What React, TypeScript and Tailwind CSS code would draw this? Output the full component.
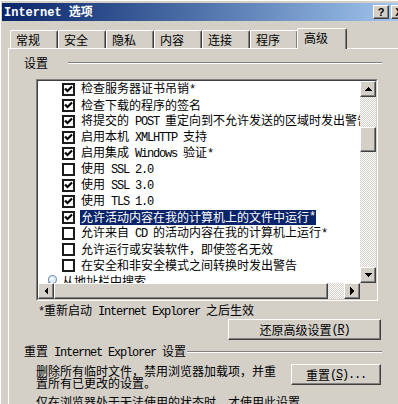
const LAT = "font-['Liberation_Mono',monospace] text-[12px] tracking-[-1.2px]";
const RAISED =
  "bg-[#d4d0c8] border border-t-white border-l-white border-r-[#404040] border-b-[#404040] shadow-[inset_-1px_-1px_#808080]";
const TRACK =
  "bg-[image:repeating-conic-gradient(#ffffff_0%_25%,#d4d0c8_0%_50%)] bg-size-[2px_2px]";

function T({ s, lat = LAT }: { s: string; lat?: string }) {
  const parts = s.split(/([\x20-\x7e]+)/).filter(Boolean);
  return (
    <>
      {parts.map((p, i) =>
        /^[\x20-\x7e]+$/.test(p) ? (
          <span key={i} className={lat}>
            {p}
          </span>
        ) : (
          <span key={i}>{p}</span>
        )
      )}
    </>
  );
}

function Arrow({ dir }: { dir: "up" | "down" | "left" | "right" }) {
  const pts = {
    up: "0,5 8,5 4,1",
    down: "0,1 8,1 4,5",
    left: "5,0 5,8 1,4",
    right: "1,0 1,8 5,4",
  }[dir];
  const vertical = dir === "up" || dir === "down";
  return (
    <svg width={vertical ? 8 : 6} height={vertical ? 6 : 8} shapeRendering="crispEdges">
      <polygon points={pts} fill="#000" />
    </svg>
  );
}

function Check({ on }: { on: boolean }) {
  return (
    <div className="w-[13px] h-[13px] shrink-0 border-2 border-[#1c1c1c] bg-white flex items-center justify-center">
      {on && (
        <svg width="9" height="9" viewBox="0 0 9 9">
          <path d="M1 3.5 L3.5 6 L8 1.5" stroke="#000" strokeWidth="2.2" fill="none" />
        </svg>
      )}
    </div>
  );
}

const rows = [
  { c: true, t: "检查服务器证书吊销*" },
  { c: true, t: "检查下载的程序的签名" },
  { c: true, t: "将提交的 POST 重定向到不允许发送的区域时发出警告" },
  { c: true, t: "启用本机 XMLHTTP 支持" },
  { c: true, t: "启用集成 Windows 验证*" },
  { c: false, t: "使用 SSL 2.0" },
  { c: true, t: "使用 SSL 3.0" },
  { c: true, t: "使用 TLS 1.0" },
  { c: true, t: "允许活动内容在我的计算机上的文件中运行*", sel: true },
  { c: false, t: "允许来自 CD 的活动内容在我的计算机上运行*" },
  { c: false, t: "允许运行或安装软件，即使签名无效" },
  { c: false, t: "在安全和非安全模式之间转换时发出警告" },
];

const tabs = ["常规", "安全", "隐私", "内容", "连接", "程序"];

export default function App() {
  return (
    <div className="w-[398px] h-[404px] overflow-hidden bg-[#d4d0c8] text-black text-[12px] leading-[12px] font-['Noto_Sans_CJK_SC',sans-serif] pt-[3px] pl-[2px] shadow-[inset_1px_1px_#ffffff]">
      {/* title bar */}
      <div className="w-[407px] h-[18px] flex items-center pl-[2px] pr-[2px] bg-gradient-to-r from-[#0a246a] to-[#a6caf0]">
        <span className="text-white font-bold whitespace-nowrap">
          <T s="Internet 选项" lat="font-['Liberation_Mono',monospace] text-[12px]" />
        </span>
        <div className="ml-auto flex gap-[2px]">
          <div className={`${RAISED} w-[16px] h-[14px] flex items-center justify-center font-bold text-[11px] font-['Liberation_Sans',sans-serif]`}>
            ?
          </div>
          <div className={`${RAISED} w-[16px] h-[14px] flex items-center justify-center font-bold text-[11px] font-['Liberation_Sans',sans-serif]`}>
            X
          </div>
        </div>
      </div>

      {/* tabs */}
      <div className="mt-[7px] h-[20px] flex items-end pl-[8px]">
        {tabs.map((t) => (
          <div
            key={t}
            className="w-[48px] h-[18px] flex items-center pl-[5px] border-t border-l border-r border-t-white border-l-white border-r-[#404040] rounded-t-[2px] shadow-[inset_-1px_0_#808080]"
          >
            {t}
          </div>
        ))}
        <div className="relative z-10 -ml-px -mb-px w-[50px] h-[21px] flex items-center pl-[6px] pb-[2px] bg-[#d4d0c8] border-t border-l border-r border-t-white border-l-white border-r-[#404040] rounded-t-[2px] shadow-[inset_-1px_0_#808080]">
          高级
        </div>
      </div>

      {/* panel */}
      <div className="ml-[6px] w-[400px] h-[400px] border-l border-t border-white">
        <div className="mt-[8px] pl-[15px] h-[12px] flex items-center">
          <span>设置</span>
          <div className="ml-[20px] w-[314px] border-t border-b border-t-[#808080] border-b-white" />
        </div>

        {/* list box */}
        <div className="ml-[27px] mt-[10px] w-[342px] h-[222px] border border-t-[#808080] border-l-[#808080] border-r-white border-b-white">
          <div className="w-full h-full border border-t-[#404040] border-l-[#404040] border-r-[#d4d0c8] border-b-[#d4d0c8] flex flex-col">
            <div className="h-[202px] flex">
              <div className="w-[322px] h-full bg-white overflow-hidden whitespace-nowrap">
                {rows.map((r) => (
                  <div key={r.t} className="h-[16px] flex items-center pl-[24px]">
                    <Check on={r.c} />
                    {r.sel ? (
                      <span className="ml-[5px] h-[15px] px-[1px] flex items-center bg-[#0a246a] text-white">
                        <T s={r.t} />
                      </span>
                    ) : (
                      <span className="ml-[6px]">
                        <T s={r.t} />
                      </span>
                    )}
                  </div>
                ))}
                <div className="h-[16px] flex items-center pl-[6px]">
                  <svg width="14" height="14" viewBox="0 0 14 14" className="shrink-0">
                    <line x1="6" y1="8" x2="1.5" y2="12.5" stroke="#8c8c8c" strokeWidth="2.4" />
                    <circle cx="8.5" cy="5.5" r="4" fill="#dfeeff" stroke="#7f97b4" strokeWidth="1.2" />
                    <circle cx="7.5" cy="4.5" r="1.3" fill="#ffffff" />
                  </svg>
                  <span className="ml-[4px]">从地址栏中搜索</span>
                </div>
              </div>
              {/* vertical scrollbar */}
              <div className="w-[16px] h-full flex flex-col">
                <div className={`${RAISED} h-[16px] flex items-center justify-center`}>
                  <Arrow dir="up" />
                </div>
                <div className={`${TRACK} h-[30px]`} />
                <div className={`${RAISED} h-[25px]`} />
                <div className={`${TRACK} flex-1`} />
                <div className={`${RAISED} h-[16px] flex items-center justify-center`}>
                  <Arrow dir="down" />
                </div>
              </div>
            </div>
            {/* horizontal scrollbar */}
            <div className="h-[16px] flex">
              <div className={`${RAISED} w-[16px] flex items-center justify-center`}>
                <Arrow dir="left" />
              </div>
              <div className={`${RAISED} w-[274px]`} />
              <div className={`${TRACK} w-[16px]`} />
              <div className={`${RAISED} w-[16px] flex items-center justify-center`}>
                <Arrow dir="right" />
              </div>
              <div className="w-[16px] bg-[#d4d0c8]" />
            </div>
          </div>
        </div>

        <div className="ml-[29px] mt-[3px] h-[12px] whitespace-nowrap">
          <T s="*重新启动 Internet Explorer 之后生效" />
        </div>

        <div className={`${RAISED} ml-[219px] mt-[3px] w-[153px] h-[21px] flex items-center justify-center`}>
          还原高级设置
          <span className={LAT}>
            (<u>R</u>)
          </span>
        </div>

        <div className="mt-[6px] pl-[15px] w-[373px] h-[12px] flex items-center whitespace-nowrap">
          <span>
            <T s="重置 Internet Explorer 设置" />
          </span>
          <div className="ml-[1px] flex-1 border-t border-b border-t-[#808080] border-b-white" />
        </div>

        <div className="ml-[27px] mt-[6px] flex items-start">
          <p className="mt-[1px] w-[242px] leading-[12px]">
            删除所有临时文件，禁用浏览器加载项，并重置所有已更改的设置。
          </p>
          <div className={`${RAISED} ml-[13px] w-[90px] h-[21px] flex items-center justify-center`}>
            重置
            <span className={LAT}>
              (<u>S</u>)...
            </span>
          </div>
        </div>

        <div className="ml-[27px] mt-[7px] whitespace-nowrap">
          仅在浏览器处于无法使用的状态时，才使用此设置。
        </div>
      </div>
    </div>
  );
}
